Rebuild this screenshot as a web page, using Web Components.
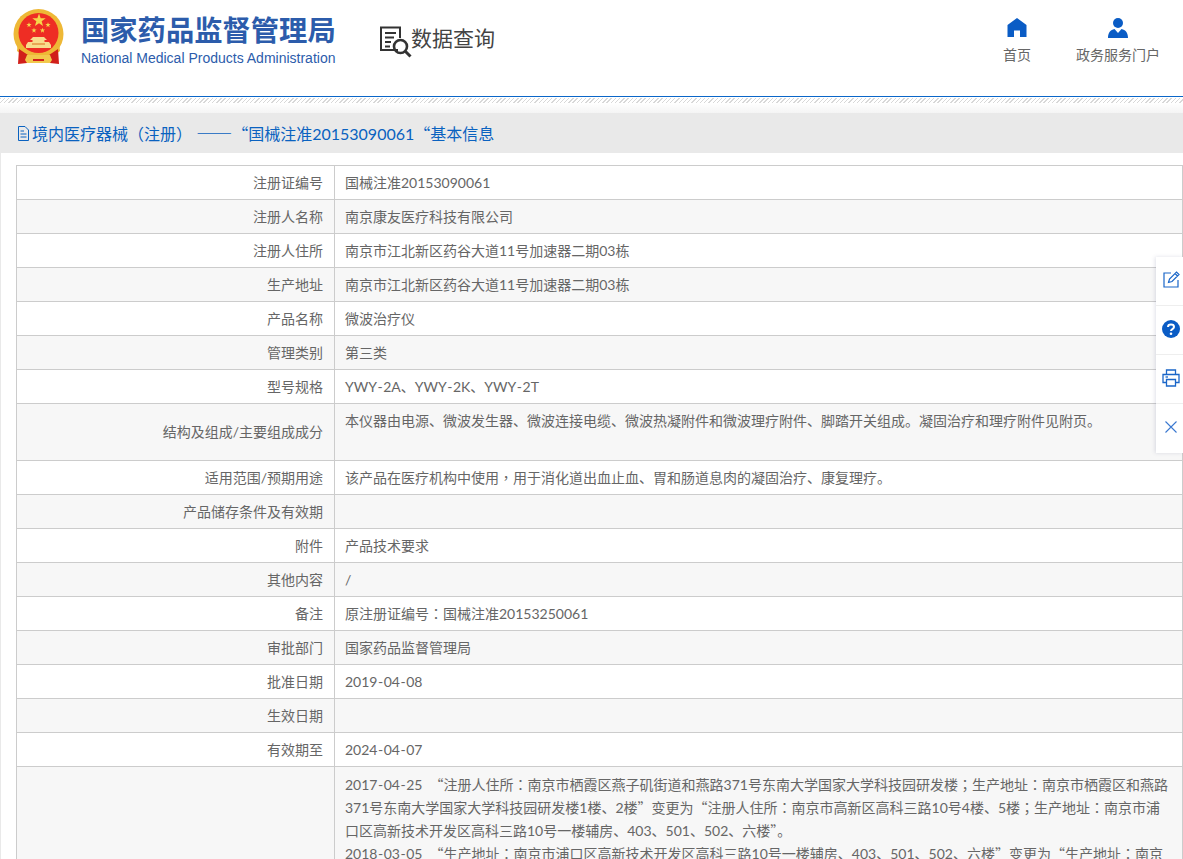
<!DOCTYPE html>
<html lang="zh-CN">
<head>
<meta charset="utf-8">
<title>数据查询</title>
<style>
  html, body { margin: 0; padding: 0; background: #fff; }
  html { height: 859px; overflow: hidden; }
  body { font-family: Lato, "Noto Sans CJK SC", sans-serif; font-size: 14px; color: #666; }
  .p { font-family: "Noto Sans CJK TC", sans-serif; line-height: 0; }
  .q { font-family: "Noto Sans CJK SC", sans-serif; line-height: 0; }
  .d { font-family: "Noto Sans CJK SC", sans-serif; line-height: 0; font-size: 18px; }
  .h { padding: 0 .5px; }
</style>
</head>
<body>
<site-header>
  <nav-link slot="nav" icon="home" label="首页"></nav-link>
  <nav-link slot="nav" icon="user" label="政务服务门户"></nav-link>
</site-header>
<page-title>境内医疗器械（注册）&nbsp;——“国械注准20153090061“基本信息</page-title>
<info-table>
  <info-row label="注册证编号">国械注准20153090061</info-row>
  <info-row label="注册人名称">南京康友医疗科技有限公司</info-row>
  <info-row label="注册人住所">南京市江北新区药谷大道11号加速器二期03栋</info-row>
  <info-row label="生产地址">南京市江北新区药谷大道11号加速器二期03栋</info-row>
  <info-row label="产品名称">微波治疗仪</info-row>
  <info-row label="管理类别">第三类</info-row>
  <info-row label="型号规格">YWY-2A、YWY-2K、YWY-2T</info-row>
  <info-row label="结构及组成/主要组成成分" tall>本仪器由电源、微波发生器、微波连接电缆、微波热凝附件和微波理疗附件、脚踏开关组成。凝固治疗和理疗附件见附页。</info-row>
  <info-row label="适用范围/预期用途">该产品在医疗机构中使用，用于消化道出血止血、胃和肠道息肉的凝固治疗、康复理疗。</info-row>
  <info-row label="产品储存条件及有效期"></info-row>
  <info-row label="附件">产品技术要求</info-row>
  <info-row label="其他内容">/</info-row>
  <info-row label="备注">原注册证编号：国械注准20153250061</info-row>
  <info-row label="审批部门">国家药品监督管理局</info-row>
  <info-row label="批准日期">2019-04-08</info-row>
  <info-row label="生效日期"></info-row>
  <info-row label="有效期至">2024-04-07</info-row>
  <info-row label="" history>2017-04-25 &nbsp;“注册人住所：南京市栖霞区燕子矶街道和燕路371号东南大学国家大学科技园研发楼；生产地址：南京市栖霞区和燕路<br>371号东南大学国家大学科技园研发楼1楼、2楼”变更为“注册人住所：南京市高新区高科三路10号4楼、5楼；生产地址：南京市浦<br>口区高新技术开发区高科三路10号一楼辅房、403、501、502、六楼”。<br>2018-03-05 &nbsp;“生产地址：南京市浦口区高新技术开发区高科三路10号一楼辅房、403、501、502、六楼”变更为“生产地址：南京</info-row>
</info-table>
<side-tools></side-tools>

<script>
const ICONS = {
  home: `<svg width="20" height="19" viewBox="0 0 20 19"><path fill="#0a5cc5" d="M10 0 L19.500 7 V19 H13 V12.500 H7 V19 H.5 V7 Z"/></svg>`,
  user: `<svg width="20" height="20" viewBox="0 0 20 20"><circle cx="10" cy="5" r="5" fill="#0a5cc5"/><path fill="#0a5cc5" d="M0 20 C0 14.500 2.500 12 6.500 11 L10 15 L13.500 11 C17.500 12 20 14.500 20 20 Z"/></svg>`
};

// colons and brackets sit centred in the reference, quotes and dashes are full width
function fixPunctuation(el) {
  el.innerHTML = el.innerHTML
    .replace(/-/g, '<span class="h">-</span>')
    .replace(/[：；，（）]/g, '<span class="p" lang="zh-TW">$&</span>')
    .replace(/[“”]/g, '<span class="q">$&</span>')
    .replace(/—+/g, '<span class="d">$&</span>');
}

class SiteHeader extends HTMLElement {
  constructor() {
    super();
    this.attachShadow({ mode: "open" });
    this.shadowRoot.innerHTML = `
      <style>
        :host { display: block; height: 96px; border-bottom: 1px solid #0a66c8; box-sizing: content-box; }
        .bar { display: flex; align-items: flex-start; height: 96px; }
        .emblem { margin: 9px 0 0 13px; flex: none; display: block; }
        .org { margin: 11px 0 0 17px; width: 256px; flex: none; }
        .cn { font: 700 28.300px/36px "Noto Sans CJK SC", sans-serif; color: #2c5cab; white-space: nowrap; }
        .en { font: 14px/16px "Liberation Sans", sans-serif; color: #2c5cab; white-space: nowrap; margin-top: 3px; }
        .query { display: flex; align-items: flex-start; margin: 26px 0 0 42px; }
        .query span { font: 21px/26px "Noto Sans CJK SC", sans-serif; color: #444; margin: -2px 0 0 -1px; }
        nav { margin-left: auto; display: flex; gap: 45px; padding: 18px 23px 0 0; }
      </style>
      <div class="bar">
        <svg class="emblem" width="51" height="55" viewBox="0 0 51 55">
          <defs>
            <path id="star" d="M0 -5 L1.200 -1.600 H4.800 L1.900 .6 L2.900 4 L0 2 L-2.900 4 L-1.900 .6 L-4.800 -1.600 H-1.200 Z"/>
          </defs>
          <circle cx="25.500" cy="25" r="25" fill="#eeb836"/>
          <circle cx="25.500" cy="24" r="20" fill="#ee2d24"/>
          <g fill="#f6d54a">
            <use href="#star" transform="translate(26 11.500) scale(1.400)"/>
            <use href="#star" transform="translate(16 16) scale(.55)"/>
            <use href="#star" transform="translate(35 16) scale(.55)"/>
            <use href="#star" transform="translate(21 21.500) scale(.55)"/>
            <use href="#star" transform="translate(29.500 21.500) scale(.55)"/>
          </g>
          <path fill="#f8dc8c" d="M20 28 H31 L34 31 H31.500 V33 H36 L38 36 V39 H13 V36 L15 33 H19.500 V31 H17 Z"/>
          <path fill="#d9711e" d="M19 34.500 H32 V35.500 H19 Z"/>
          <path fill="#eeb836" d="M5 33 C9 42 17 45 25.500 45 C34 45 42 42 46 33 L47 42 C41 47 33 49 25.500 49 C18 49 10 47 4 42 Z"/>
          <path fill="#d11f1a" d="M6 40 L15 46 L14 54 L5 55 Z M45 40 L36 46 L37 54 L46 55 Z"/>
          <path fill="#f2c94c" d="M14 46 H37 L39 51 L37 54 H14 L12 51 Z"/>
          <path fill="#d11f1a" d="M20 50 H31 V52 H20 Z"/>
        </svg>
        <div class="org">
          <div class="cn">国家药品监督管理局</div>
          <div class="en">National Medical Products Administration</div>
        </div>
        <div class="query">
          <svg width="33" height="32" viewBox="0 0 33 32" fill="none" stroke="#333">
            <path stroke-width="2" d="M19 24 H2 V1.500 H21 V12"/>
            <path stroke-width="2" d="M6 7 H17 M6 11.500 H15 M6 16 H12 M6 20.500 H11"/>
            <circle cx="21.500" cy="20.500" r="6.500" stroke-width="2.600"/>
            <path stroke-width="3" d="M26.500 25.500 L31.500 30.500"/>
          </svg>
          <span>数据查询</span>
        </div>
        <nav><slot name="nav"></slot></nav>
      </div>
    `;
  }
}

class NavLink extends HTMLElement {
  constructor() {
    super();
    this.attachShadow({ mode: "open" });
  }

  connectedCallback() {
    this.shadowRoot.innerHTML = `
      <style>
        :host { display: block; text-align: center; font-size: 14px; line-height: 20px; color: #666; }
        .icon { height: 20px; display: flex; justify-content: center; margin-bottom: 7px; }
      </style>
      <div class="icon">${ICONS[this.getAttribute("icon")]}</div>
      <div>${this.getAttribute("label")}</div>
    `;
  }
}

class PageTitle extends HTMLElement {
  constructor() {
    super();
    this.attachShadow({ mode: "open" });
    this.shadowRoot.innerHTML = `
      <style>
        :host { display: block; }
        .hatch {
          height: 5px; margin-top: 1px;
          background: repeating-linear-gradient(135deg, #d8d8d8 0 1px, #fff 1px 3px);
        }
        .fade { height: 10px; background: linear-gradient(#fff, #f4f4f4); }
        .title {
          display: flex; align-items: center; height: 40px; padding-left: 17px;
          background: #e9e9e9; color: #0a62c0; font-size: 16px; white-space: nowrap;
        }
        svg { margin-right: 2px; flex: none; }
      </style>
      <div class="hatch"></div>
      <div class="fade"></div>
      <div class="title">
        <svg width="13" height="15" viewBox="0 0 13 15" fill="none" stroke="#0a62c0">
          <path d="M1.500 .5 H8 L11.500 4 V14.500 H1.500 Z M3.500 5 H7 M3.500 8 H9.500 M3.500 11 H9.500"/>
        </svg>
        <span><slot></slot></span>
      </div>
    `;
  }

  connectedCallback() {
    fixPunctuation(this);
  }
}

class InfoTable extends HTMLElement {
  constructor() {
    super();
    this.attachShadow({ mode: "open" });
    this.shadowRoot.innerHTML = `
      <style>
        :host { display: block; padding: 12px 0 0 15px; border-left: 1px solid #e9e9e9; }
        .table { border: 1px solid #ccc; border-bottom: 0; }
        ::slotted(info-row:nth-child(even)) { background: #f7f7f7; }
      </style>
      <div class="table"><slot></slot></div>
    `;
  }
}

class InfoRow extends HTMLElement {
  constructor() {
    super();
    this.attachShadow({ mode: "open" });
  }

  connectedCallback() {
    fixPunctuation(this);
    this.shadowRoot.innerHTML = `
      <style>
        :host { display: grid; grid-template-columns: 317px 1fr; border-bottom: 1px solid #ccc; color: #666; font-size: 14px; }
        .label, .value { box-sizing: border-box; min-height: 33px; }
        .label { display: flex; align-items: center; justify-content: flex-end; padding: 0 11px 0 0; line-height: 20px; }
        .value { border-left: 1px solid #ccc; padding: 7px 12px 6px 10px; line-height: 20px; }
        :host([tall]) .value { min-height: 56px; }
        :host([history]) .value { line-height: 23px; padding-top: 6px; white-space: nowrap; }
      </style>
      <div class="label">${this.getAttribute("label")}</div>
      <div class="value"><slot></slot></div>
    `;
  }
}

class SideTools extends HTMLElement {
  constructor() {
    super();
    this.attachShadow({ mode: "open" });
    this.shadowRoot.innerHTML = `
      <style>
        :host { display: block; position: fixed; right: 0; top: 257px; width: 27px; background: #fff; box-shadow: -1px 0 4px rgba(60, 70, 120, .16); }
        div { height: 49px; display: flex; align-items: center; justify-content: center; padding: 0 0 3px 3px; border-bottom: 1px solid #eee; box-sizing: border-box; }
        div:last-child { border-bottom: 0; }
      </style>
      <div><svg width="17" height="17" viewBox="0 0 17 17" fill="none" stroke="#1a66c8" stroke-width="1.200"><path d="M8 2 H1 V16 H15 V9"/><path d="M5.500 11.500 L6.500 8 L13.500 1 L16 3.500 L9 10.500 Z M12 2.500 L14.500 5"/></svg></div>
      <div><svg width="18" height="18" viewBox="0 0 18 18"><circle cx="9" cy="9" r="9" fill="#0a5cc5"/><path d="M6 7 C6 3.800 12 3.800 12 7 C12 9.200 9 9 9 11" fill="none" stroke="#fff" stroke-width="2"/><circle cx="9" cy="13.800" r="1.300" fill="#fff"/></svg></div>
      <div><svg width="18" height="18" viewBox="0 0 18 18" fill="none" stroke="#1a66c8" stroke-width="1.300"><path d="M4.500 5 V1 H13.500 V5"/><path d="M4 13.500 H1 V5.500 H17 V13.500 H14"/><path d="M4.500 10.500 H13.500 V17 H4.500 Z"/><path d="M3.500 8 H6"/></svg></div>
      <div><svg width="14" height="14" viewBox="0 0 14 14" fill="none" stroke="#3a78d0" stroke-width="1.100"><path d="M1.500 1.500 L12.500 12.500 M12.500 1.500 L1.500 12.500"/></svg></div>
    `;
  }
}

customElements.define("site-header", SiteHeader);
customElements.define("nav-link", NavLink);
customElements.define("page-title", PageTitle);
customElements.define("info-table", InfoTable);
customElements.define("info-row", InfoRow);
customElements.define("side-tools", SideTools);
</script>
</body>
</html>
